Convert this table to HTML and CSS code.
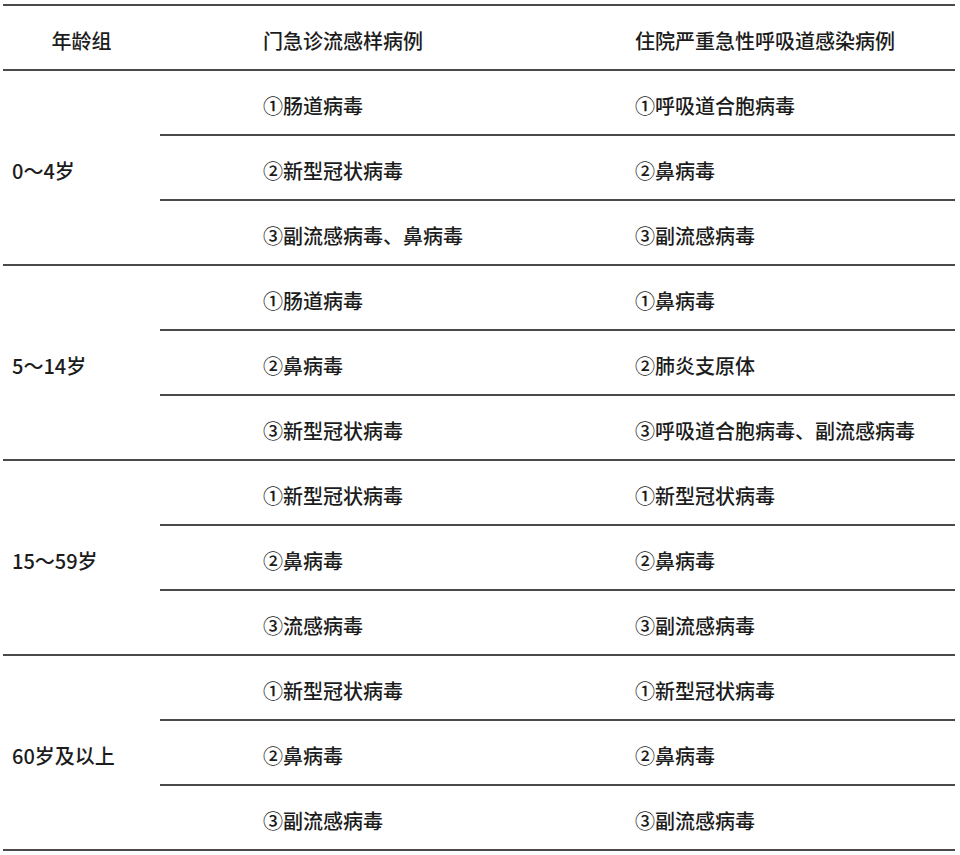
FILE: index.html
```html
<!DOCTYPE html>
<html lang="zh-CN">
<head>
<meta charset="utf-8">
<title>病原体构成</title>
<link rel="stylesheet" href="styles.css">
</head>
<body>
<div class="table">
  <div class="head">
    <div class="h1">年龄组</div>
    <div class="c2">门急诊流感样病例</div>
    <div class="c3">住院严重急性呼吸道感染病例</div>
  </div>

  <div class="group">
    <div class="age">0～4岁</div>
    <div class="rows">
      <div class="row"><div class="c2">①肠道病毒</div><div class="c3">①呼吸道合胞病毒</div></div>
      <div class="row"><div class="c2">②新型冠状病毒</div><div class="c3">②鼻病毒</div></div>
      <div class="row"><div class="c2">③副流感病毒、鼻病毒</div><div class="c3">③副流感病毒</div></div>
    </div>
  </div>

  <div class="group">
    <div class="age">5～14岁</div>
    <div class="rows">
      <div class="row"><div class="c2">①肠道病毒</div><div class="c3">①鼻病毒</div></div>
      <div class="row"><div class="c2">②鼻病毒</div><div class="c3">②肺炎支原体</div></div>
      <div class="row"><div class="c2">③新型冠状病毒</div><div class="c3">③呼吸道合胞病毒、副流感病毒</div></div>
    </div>
  </div>

  <div class="group">
    <div class="age">15～59岁</div>
    <div class="rows">
      <div class="row"><div class="c2">①新型冠状病毒</div><div class="c3">①新型冠状病毒</div></div>
      <div class="row"><div class="c2">②鼻病毒</div><div class="c3">②鼻病毒</div></div>
      <div class="row"><div class="c2">③流感病毒</div><div class="c3">③副流感病毒</div></div>
    </div>
  </div>

  <div class="group">
    <div class="age">60岁及以上</div>
    <div class="rows">
      <div class="row"><div class="c2">①新型冠状病毒</div><div class="c3">①新型冠状病毒</div></div>
      <div class="row"><div class="c2">②鼻病毒</div><div class="c3">②鼻病毒</div></div>
      <div class="row"><div class="c2">③副流感病毒</div><div class="c3">③副流感病毒</div></div>
    </div>
  </div>
</div>
</body>
</html>
```

FILE: styles.css
```css
html, body {
  margin: 0;
  padding: 0;
  background: #ffffff;
}

body {
  font-family: "Noto Sans CJK SC", "Noto Sans", sans-serif;
  font-size: 20px;
  font-weight: 500;
  line-height: 20px;
  color: #1c1c1c;
}

.table {
  margin: 4px 0 0 3px;
  width: 952px;
  border-top: 2px solid #4a4a4a;
}

.head {
  display: flex;
  height: 63px;
  border-bottom: 2px solid #4a4a4a;
}

.h1 {
  width: 157px;
  flex: none;
  display: flex;
  align-items: center;
  justify-content: center;
  padding-top: 6px;
  box-sizing: border-box;
}

.c2 {
  width: 475px;
  flex: none;
  display: flex;
  align-items: center;
  padding-left: 103px;
  padding-top: 6px;
  box-sizing: border-box;
}

.c3 {
  flex: 1;
  display: flex;
  align-items: center;
  padding-top: 6px;
  box-sizing: border-box;
}

.group {
  display: flex;
  border-bottom: 2px solid #4a4a4a;
}

.age {
  width: 157px;
  flex: none;
  display: flex;
  align-items: center;
  padding-left: 9px;
  padding-top: 6px;
  box-sizing: border-box;
}

.rows {
  flex: 1;
  display: flex;
  flex-direction: column;
}

.row {
  display: flex;
  height: 63px;
  border-bottom: 2px solid #4a4a4a;
}

.row:last-child {
  border-bottom: none;
}
```
